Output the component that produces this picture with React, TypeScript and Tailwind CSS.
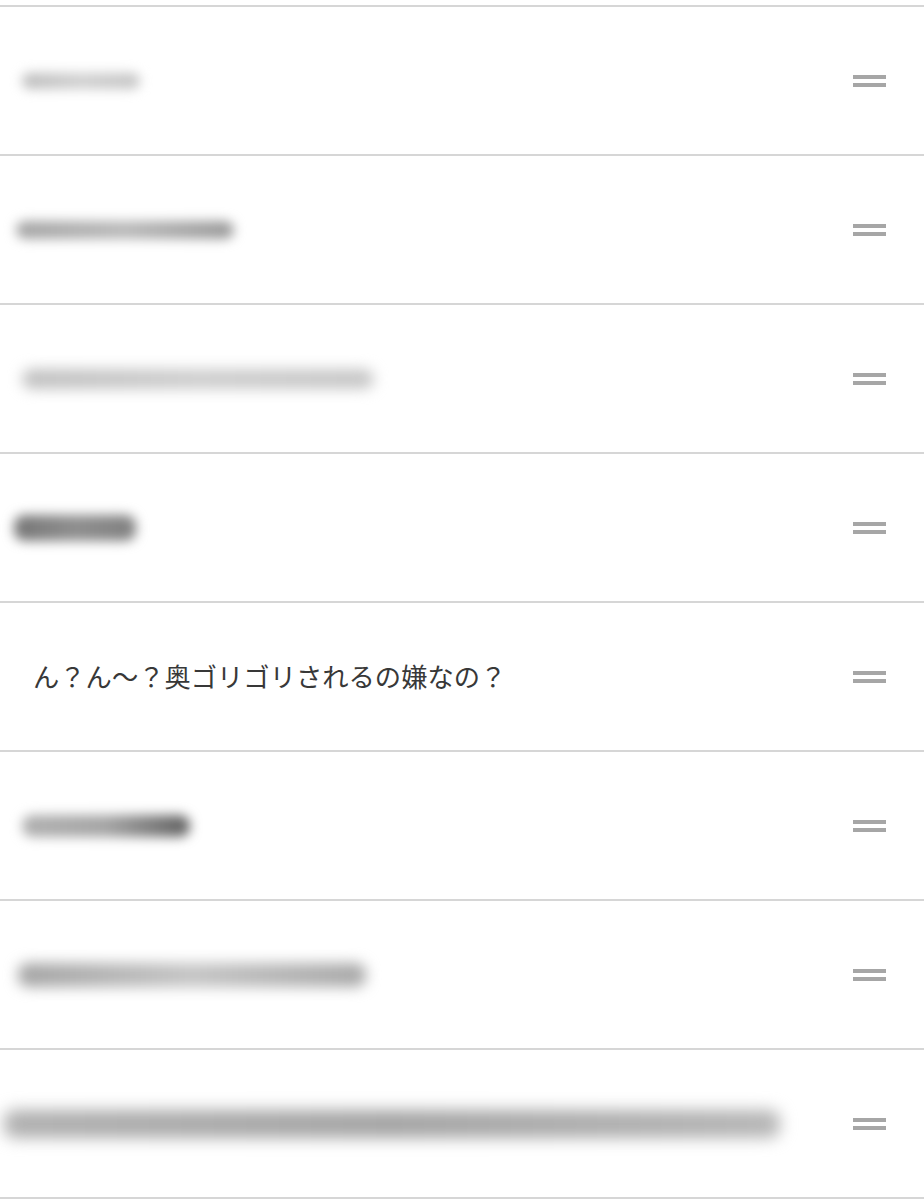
const rows = [
  { blur: 'ml-[22px] w-[118px] h-[16px] bg-gradient-to-r from-[#bcbcbc] via-[#cfcfcf] to-[#c4c4c4] blur-[6px]' },
  { blur: 'ml-[16px] w-[218px] h-[18px] bg-gradient-to-r from-[#a4a4a4] via-[#b8b8b8] to-[#989898] blur-[6px]' },
  { blur: 'ml-[22px] w-[352px] h-[20px] bg-gradient-to-r from-[#c0c0c0] via-[#cdcdcd] to-[#c6c6c6] blur-[7px]' },
  { blur: 'ml-[14px] w-[122px] h-[26px] bg-gradient-to-r from-[#757575] via-[#8e8e8e] to-[#808080] blur-[6px]' },
  { text: 'ん？ん〜？奥ゴリゴリされるの嫌なの？' },
  { blur: 'ml-[22px] w-[168px] h-[22px] bg-gradient-to-r from-[#b0b0b0] via-[#a4a4a4] to-[#606060] blur-[6px]' },
  { blur: 'ml-[18px] w-[348px] h-[24px] bg-gradient-to-r from-[#a4a4a4] via-[#c4c4c4] to-[#a8a8a8] blur-[7px]' },
  { blur: 'ml-[4px] w-[776px] h-[28px] bg-gradient-to-r from-[#b0b0b0] via-[#a4a4a4] to-[#b6b6b6] blur-[8px]' },
];

function DragHandle() {
  return (
    <div className="flex flex-col gap-[4px] w-[33px] shrink-0">
      <span className="block h-[4px] bg-[#a6a6a6]" />
      <span className="block h-[4px] bg-[#a6a6a6]" />
    </div>
  );
}

export default function App() {
  return (
    <div
      className="w-[924px] h-[1199px] bg-white overflow-hidden"
      style={{ fontFamily: '"Noto Sans CJK JP", "Noto Sans", sans-serif' }}
    >
      <div className="h-[7px] border-b-2 border-[#d6d6d6]" />
      {rows.map((row, i) => (
        <div
          key={i}
          className="h-[149px] border-b-2 border-[#d6d6d6] flex items-center justify-between pr-[38px]"
        >
          {row.text ? (
            <span className="pl-[33px] text-[26.3px] leading-none text-[#383838] whitespace-nowrap">
              {row.text}
            </span>
          ) : (
            <div className={`rounded-[10px] ${row.blur}`} />
          )}
          <DragHandle />
        </div>
      ))}
    </div>
  );
}
